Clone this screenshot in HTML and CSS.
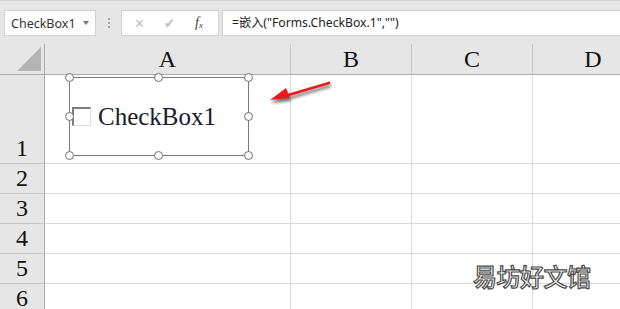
FILE: index.html
```html
<!DOCTYPE html>
<html lang="zh-CN">
<head>
    <meta charset="UTF-8">
    <title>CheckBox1</title>
    <link rel="stylesheet" href="styles.css">
</head>
<body>
    <div class="toolbar">
        <div class="name-box">
            <span>CheckBox1</span>
            <span class="caret"></span>
        </div>
        <div class="grip"><i></i><i></i><i></i></div>
        <div class="fx-buttons">
            <span class="fx-btn">&#x2715;</span>
            <span class="fx-btn">&#x2714;</span>
            <span class="fx-btn fx">f<sub>x</sub></span>
        </div>
        <div class="formula">=嵌入("Forms.CheckBox.1","")</div>
    </div>

    <div class="sheet">
        <div class="grid">
            <div class="corner"><span class="tri"></span></div>
            <div class="col-head">A</div>
            <div class="col-head">B</div>
            <div class="col-head">C</div>
            <div class="col-head">D</div>

            <div class="row-head">1</div>
            <div class="cell"></div><div class="cell"></div><div class="cell"></div><div class="cell"></div>
            <div class="row-head">2</div>
            <div class="cell"></div><div class="cell"></div><div class="cell"></div><div class="cell"></div>
            <div class="row-head">3</div>
            <div class="cell"></div><div class="cell"></div><div class="cell"></div><div class="cell"></div>
            <div class="row-head">4</div>
            <div class="cell"></div><div class="cell"></div><div class="cell"></div><div class="cell"></div>
            <div class="row-head">5</div>
            <div class="cell"></div><div class="cell"></div><div class="cell"></div><div class="cell"></div>
            <div class="row-head">6</div>
            <div class="cell"></div><div class="cell"></div><div class="cell"></div><div class="cell"></div>
        </div>

        <!-- embedded ActiveX control in design mode -->
        <div class="shape">
            <div class="checkbox">
                <span class="box"></span>
                <span class="label">CheckBox1</span>
            </div>
            <span class="handle h-tl"></span>
            <span class="handle h-tm"></span>
            <span class="handle h-tr"></span>
            <span class="handle h-ml"></span>
            <span class="handle h-mr"></span>
            <span class="handle h-bl"></span>
            <span class="handle h-bm"></span>
            <span class="handle h-br"></span>
        </div>

        <svg class="arrow" width="70" height="30" viewBox="0 0 70 30">
            <defs>
                <filter id="shadow" x="-20%" y="-50%" width="140%" height="200%">
                    <feGaussianBlur stdDeviation="1.4"/>
                </filter>
            </defs>
            <g transform="translate(1,3)" filter="url(#shadow)" opacity="0.55">
                <path d="M62 6 L18 19" stroke="#000" stroke-width="2.8" stroke-linecap="round"/>
                <path d="M3 23 L19 11 L23 21 Z" fill="#000"/>
            </g>
            <path d="M62 6 L18 19" stroke="#f01818" stroke-width="2.8" stroke-linecap="round"/>
            <path d="M3 23 L19 11 L23 21 Z" fill="#f01818"/>
        </svg>

        <div class="watermark">易坊好文馆</div>
    </div>
</body>
</html>
```

FILE: styles.css
```css
* {
    margin: 0;
    padding: 0;
    box-sizing: border-box;
}
body {
    width: 620px;
    height: 309px;
    overflow: hidden;
    background-color: #e6e6e6;
    font-family: 'Noto Sans', 'Noto Sans CJK SC', sans-serif;
    color: #222;
}
.toolbar {
    height: 44px;
    border-top: 1px solid #d2d2d2;
    display: flex;
    align-items: flex-start;
    padding-top: 9px;
}
.name-box {
    margin-left: 4px;
    width: 92px;
    height: 26px;
    background-color: #fff;
    border: 1px solid #d0d0d0;
    display: flex;
    align-items: center;
    justify-content: space-between;
    padding: 0 6px 0 6px;
    font-size: 12.5px;
    color: #333;
}
.caret {
    width: 0;
    height: 0;
    border-left: 3.5px solid transparent;
    border-right: 3.5px solid transparent;
    border-top: 4px solid #777;
}
.grip {
    width: 25px;
    height: 26px;
    display: flex;
    flex-direction: column;
    align-items: center;
    justify-content: center;
    gap: 2px;
}
.grip i {
    width: 2px;
    height: 2px;
    background-color: #a8a8a8;
}
.fx-buttons {
    width: 98px;
    height: 26px;
    background-color: #fff;
    border: 1px solid #d0d0d0;
    display: flex;
    align-items: center;
    justify-content: space-around;
    padding: 0 4px 0 2px;
}
.fx-btn {
    font-size: 13px;
    color: #c0c0c0;
    width: 24px;
    text-align: center;
}
.fx-btn.fx {
    font-family: 'Liberation Serif', serif;
    font-style: italic;
    font-size: 14px;
    color: #444;
}
.fx-btn.fx sub {
    font-size: 9px;
    vertical-align: -1px;
}
.formula {
    flex: 1;
    margin-left: 3px;
    height: 26px;
    background-color: #fff;
    border: 1px solid #d0d0d0;
    border-right: none;
    padding-left: 9px;
    font-size: 12.2px;
    line-height: 24px;
    color: #222;
}
.sheet {
    position: relative;
}
.grid {
    display: grid;
    grid-template-columns: 45px 246px 121px 121px 121px;
    grid-template-rows: 31px 89px 30px 30px 30px 30px 30px;
    background-color: #fff;
}
.corner {
    background-color: #e6e6e6;
    border-right: 1px solid #ababab;
    border-bottom: 1px solid #ababab;
    position: relative;
}
.tri {
    position: absolute;
    right: 3px;
    bottom: 3px;
    width: 0;
    height: 0;
    border-left: 24px solid transparent;
    border-bottom: 24px solid #b4b4b4;
}
.col-head {
    background-color: #e6e6e6;
    border-right: 1px solid #c8c8c8;
    border-bottom: 1px solid #ababab;
    font-family: 'Liberation Serif', serif;
    font-size: 24px;
    line-height: 30px;
    text-align: center;
    color: #111;
}
.row-head {
    background-color: #e6e6e6;
    border-right: 1px solid #ababab;
    border-bottom: 1px solid #c8c8c8;
    font-family: 'Liberation Serif', serif;
    font-size: 24px;
    line-height: 29px;
    color: #111;
    display: flex;
    align-items: flex-end;
    justify-content: center;
}
.cell {
    border-right: 1px solid #d9d9d9;
    border-bottom: 1px solid #d9d9d9;
}
.shape {
    position: absolute;
    left: 69px;
    top: 33px;
    width: 180px;
    height: 79px;
    border: 1.5px solid #7a7a7a;
}
.checkbox {
    display: flex;
    align-items: center;
    height: 100%;
    padding-left: 2px;
}
.box {
    flex-shrink: 0;
    width: 19px;
    height: 19px;
    border-top: 2px solid #7d7d7d;
    border-left: 2px solid #7d7d7d;
    border-right: 1px solid #dcdcdc;
    border-bottom: 1px solid #dcdcdc;
    background-color: #fff;
    margin-right: 7px;
}
.label {
    font-family: 'Liberation Serif', serif;
    font-size: 25px;
    color: #1a1a2e;
    line-height: 26px;
    white-space: nowrap;
}
.handle {
    position: absolute;
    width: 9px;
    height: 9px;
    border-radius: 50%;
    border: 1.5px solid #6e6e6e;
    background-color: #fff;
}
.h-tl { left: -5px; top: -5px; }
.h-tm { left: 84px; top: -5px; }
.h-tr { right: -5px; top: -5px; }
.h-ml { left: -5px; top: 34px; }
.h-mr { right: -5px; top: 34px; }
.h-bl { left: -5px; bottom: -5px; }
.h-bm { left: 84px; bottom: -5px; }
.h-br { right: -5px; bottom: -5px; }
.arrow {
    position: absolute;
    left: 267px;
    top: 33px;
}
.watermark {
    position: absolute;
    left: 473px;
    top: 214px;
    font-family: 'Noto Sans CJK SC', sans-serif;
    font-size: 24px;
    font-weight: 500;
    color: #fff;
    -webkit-text-stroke: 1.2px #4a4a4a;
    letter-spacing: -0.5px;
}
```
